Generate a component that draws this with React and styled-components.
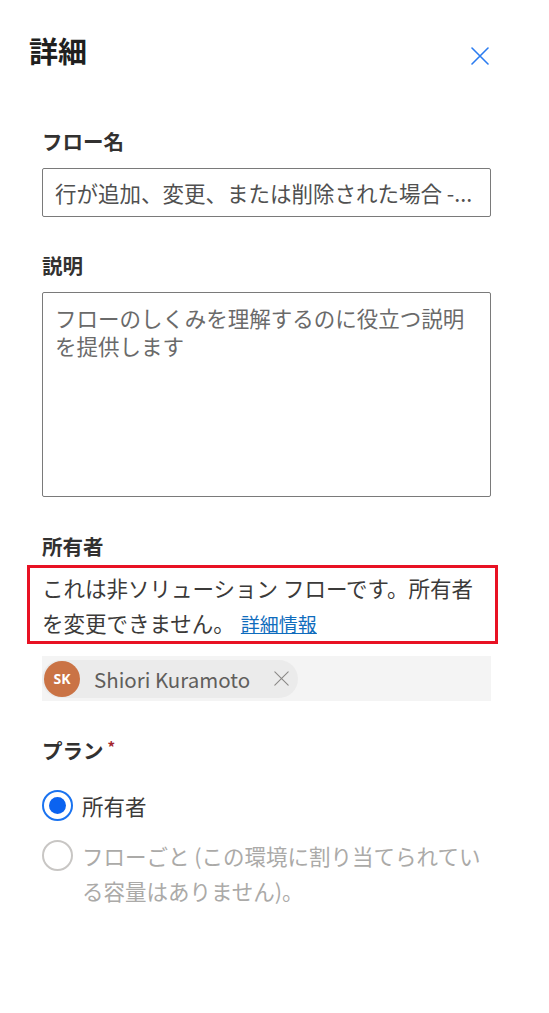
import React from 'react';
import styled, { createGlobalStyle } from 'styled-components';

const GlobalStyle = createGlobalStyle`
    body {
        margin: 0;
        background: #ffffff;
        font-family: "Noto Sans CJK JP", "Noto Sans", sans-serif;
    }
`

const Panel = styled.div`
    width: 549px;
    min-height: 1013px;
    box-sizing: border-box;
    background: #ffffff;
`

const Header = styled.div`
    display: flex;
    justify-content: space-between;
    align-items: flex-start;
    padding: 29px 60px 0 29px;
    height: 43px;
`

const Title = styled.h1`
    margin: 0;
    font-size: 29px;
    line-height: 42px;
    font-weight: 700;
    color: #201f1e;
`

const CloseButton = styled.button`
    border: 0;
    background: none;
    padding: 0;
    margin-top: 18px;
    width: 18px;
    height: 18px;
    display: flex;
    cursor: pointer;
`

const Body = styled.div`
    padding: 0 58px 0 42px;
    display: flex;
    flex-direction: column;
`

const Label = styled.div`
    font-size: 20.5px;
    line-height: 30px;
    font-weight: 600;
    color: #323130;
    margin-top: ${p => p.$top}px;
    margin-bottom: ${p => p.$bottom}px;
`

const Required = styled.span`
    color: #a4262c;
    font-size: 15px;
    vertical-align: top;
    margin-left: 4px;
    line-height: 24px;
`

const TextInput = styled.div`
    height: 49px;
    box-sizing: border-box;
    border: 1px solid #7a7a7a;
    border-radius: 2px;
    padding: 0 12px;
    display: flex;
    align-items: center;
    font-size: 21.5px;
    color: #505050;
    white-space: nowrap;
    overflow: hidden;
`

const TextArea = styled.div`
    height: 205px;
    box-sizing: border-box;
    border: 1px solid #7a7a7a;
    border-radius: 2px;
    padding: 11px 12px;
    font-size: 21.5px;
    line-height: 28px;
    color: #6a6a6a;
`

const Highlight = styled.div`
    margin: 4px -7px 0 -15px;
    border: 3px solid #e81123;
    padding: 2px 4px 0 12px;
    font-size: 21.5px;
    line-height: 35px;
    color: #3b3a39;
`

const Link = styled.a`
    color: #0f6cbd;
    text-decoration: underline;
    font-size: 19px;
    margin-left: 6px;
`

const PeopleField = styled.div`
    margin-top: 12px;
    height: 45px;
    background: #f4f4f4;
    display: flex;
    align-items: center;
`

const Chip = styled.div`
    display: flex;
    align-items: center;
    height: 38px;
    width: 256px;
    box-sizing: border-box;
    background: #ebebeb;
    border-radius: 19px;
    padding-left: 2px;
`

const Avatar = styled.div`
    width: 36px;
    height: 36px;
    border-radius: 50%;
    background: #ca7345;
    color: #ffffff;
    font-family: "Noto Sans", sans-serif;
    font-weight: 700;
    font-size: 14px;
    display: flex;
    align-items: center;
    justify-content: center;
`

const PersonName = styled.span`
    margin-left: 14px;
    font-size: 20.5px;
    color: #605e5c;
`

const ChipRemove = styled.span`
    margin-left: 24px;
    display: flex;
`

const RadioGroup = styled.div`
    display: flex;
    flex-direction: column;
    gap: 15px;
    margin-top: 23px;
`

const RadioRow = styled.label`
    display: flex;
    align-items: flex-start;
    gap: 9px;
    font-size: 21.5px;
    line-height: 35px;
    color: ${p => (p.$disabled ? '#abaaa8' : '#3b3a39')};
`

const RadioCircle = styled.span`
    flex: none;
    width: 31px;
    height: 31px;
    margin-top: 2px;
    box-sizing: border-box;
    border-radius: 50%;
    border: 2px solid ${p => (p.$checked ? '#1a73f0' : '#c8c6c4')};
    display: flex;
    align-items: center;
    justify-content: center;
    &::after {
        content: '';
        display: ${p => (p.$checked ? 'block' : 'none')};
        width: 17px;
        height: 17px;
        border-radius: 50%;
        background: #0b63f0;
    }
`

const RadioText = styled.span`
    width: 400px;
`

const CrossIcon = ({ size, color, width }) => (
    <svg width={size} height={size} viewBox="0 0 18 18">
        <path d="M1 1 L17 17 M17 1 L1 17" stroke={color} strokeWidth={width} strokeLinecap="round" />
    </svg>
)

const App = () => {
    return (
        <Panel>
            <GlobalStyle />
            <Header>
                <Title>詳細</Title>
                <CloseButton aria-label="閉じる">
                    <CrossIcon size={18} color="#2b7cf0" width={1.6} />
                </CloseButton>
            </Header>
            <Body>
                <Label $top={54} $bottom={12}>フロー名</Label>
                <TextInput>行が追加、変更、または削除された場合 -...</TextInput>

                <Label $top={33} $bottom={12}>説明</Label>
                <TextArea>フローのしくみを理解するのに役立つ説明を提供します</TextArea>

                <Label $top={34} $bottom={0}>所有者</Label>
                <Highlight>
                    これは非ソリューション フローです。所有者を変更できません。
                    <Link href="#">詳細情報</Link>
                </Highlight>
                <PeopleField>
                    <Chip>
                        <Avatar>SK</Avatar>
                        <PersonName>Shiori Kuramoto</PersonName>
                        <ChipRemove>
                            <CrossIcon size={15} color="#8a8886" width={1.3} />
                        </ChipRemove>
                    </Chip>
                </PeopleField>

                <Label $top={34} $bottom={0}>プラン<Required>*</Required></Label>
                <RadioGroup>
                    <RadioRow>
                        <RadioCircle $checked />
                        <RadioText>所有者</RadioText>
                    </RadioRow>
                    <RadioRow $disabled>
                        <RadioCircle />
                        <RadioText>フローごと (この環境に割り当てられている容量はありません)。</RadioText>
                    </RadioRow>
                </RadioGroup>
            </Body>
        </Panel>
    );
};

export default App;
